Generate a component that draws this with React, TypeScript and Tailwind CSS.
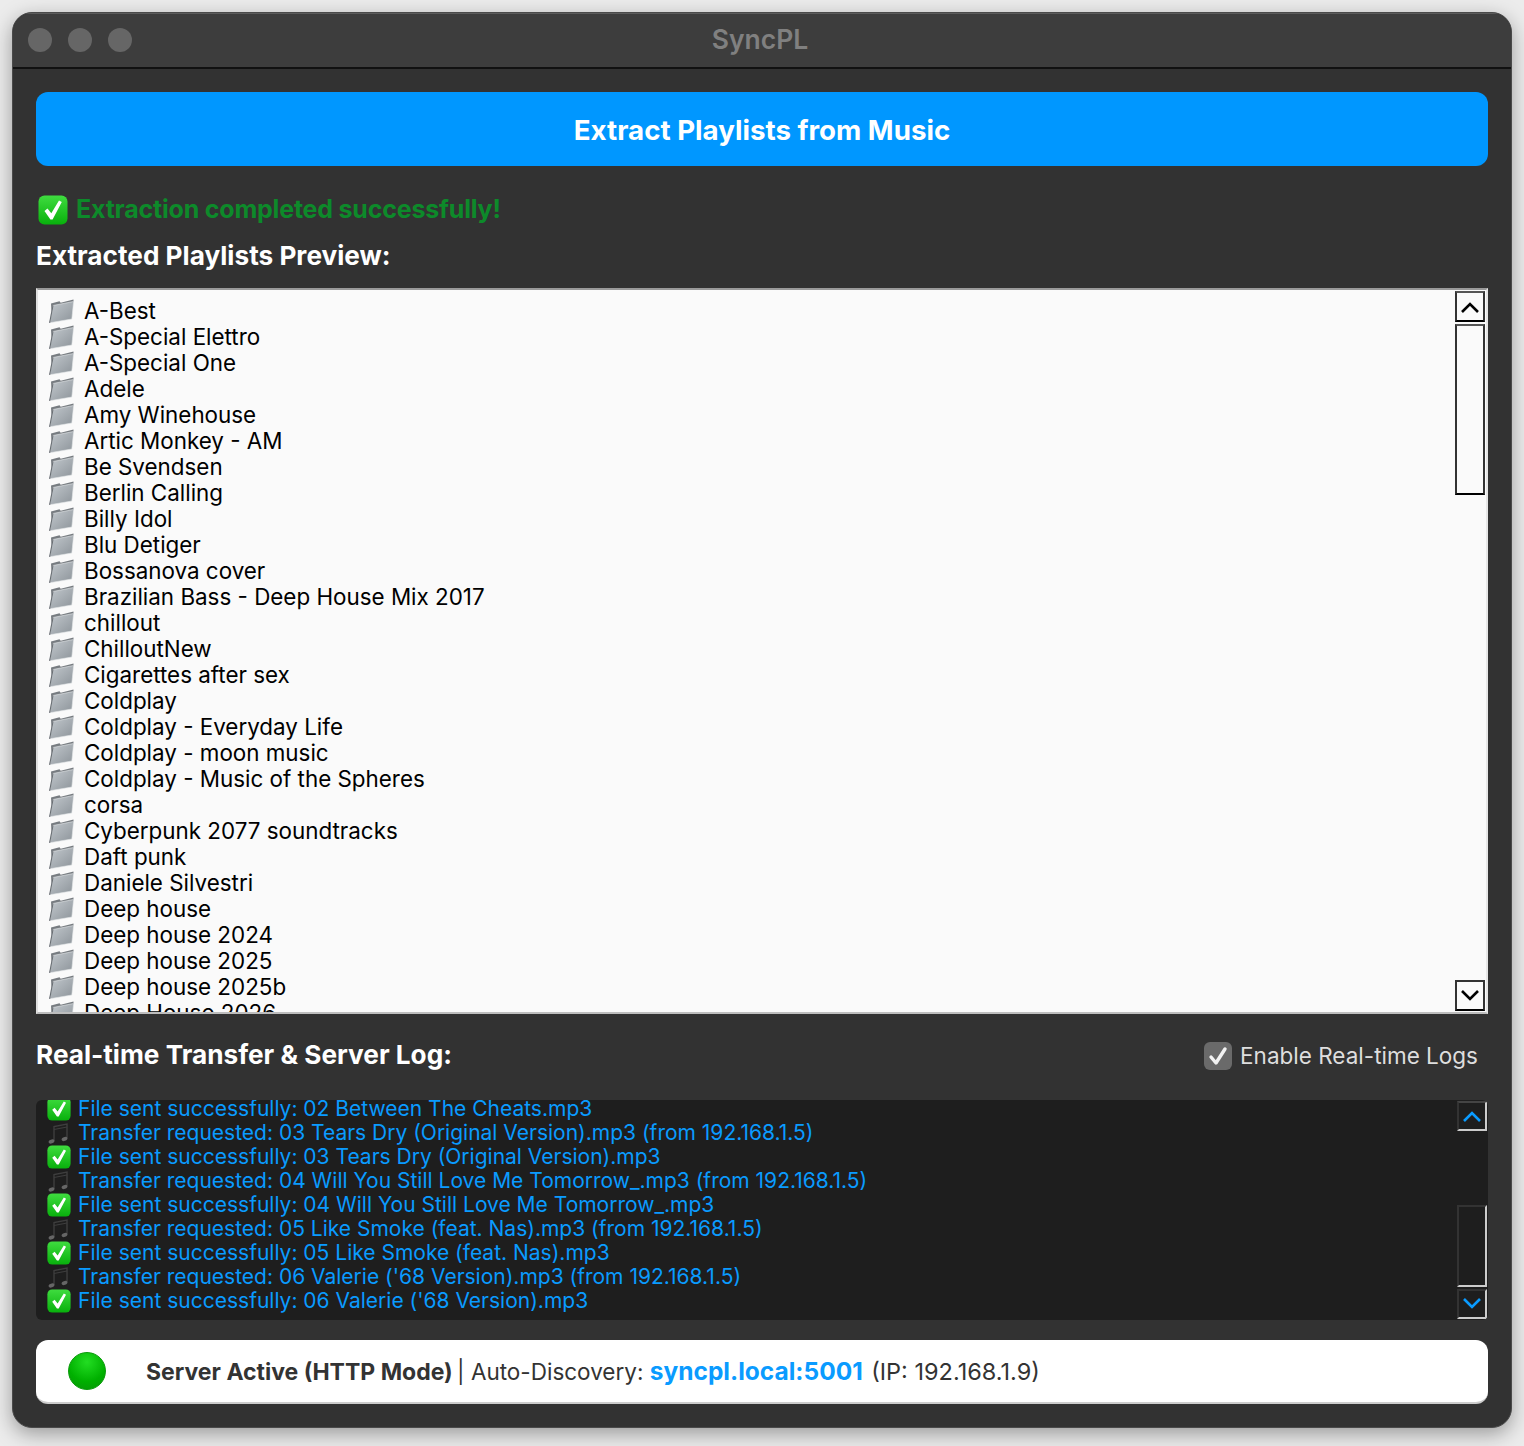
const playlists = [
  "A-Best",
  "A-Special Elettro",
  "A-Special One",
  "Adele",
  "Amy Winehouse",
  "Artic Monkey - AM",
  "Be Svendsen",
  "Berlin Calling",
  "Billy Idol",
  "Blu Detiger",
  "Bossanova cover",
  "Brazilian Bass - Deep House Mix 2017",
  "chillout",
  "ChilloutNew",
  "Cigarettes after sex",
  "Coldplay",
  "Coldplay - Everyday Life",
  "Coldplay - moon music",
  "Coldplay - Music of the Spheres",
  "corsa",
  "Cyberpunk 2077 soundtracks",
  "Daft punk",
  "Daniele Silvestri",
  "Deep house",
  "Deep house 2024",
  "Deep house 2025",
  "Deep house 2025b",
  "Deep House 2026",
];

const logs = [
  { ok: true, text: "File sent successfully: 02 Between The Cheats.mp3" },
  { ok: false, text: "Transfer requested: 03 Tears Dry (Original Version).mp3 (from 192.168.1.5)" },
  { ok: true, text: "File sent successfully: 03 Tears Dry (Original Version).mp3" },
  { ok: false, text: "Transfer requested: 04 Will You Still Love Me Tomorrow_.mp3 (from 192.168.1.5)" },
  { ok: true, text: "File sent successfully: 04 Will You Still Love Me Tomorrow_.mp3" },
  { ok: false, text: "Transfer requested: 05 Like Smoke (feat. Nas).mp3 (from 192.168.1.5)" },
  { ok: true, text: "File sent successfully: 05 Like Smoke (feat. Nas).mp3" },
  { ok: false, text: "Transfer requested: 06 Valerie ('68 Version).mp3 (from 192.168.1.5)" },
  { ok: true, text: "File sent successfully: 06 Valerie ('68 Version).mp3" },
];

const CheckEmoji = ({ className }: { className: string }) => (
  <svg viewBox="0 0 30 30" className={className}>
    <defs>
      <linearGradient id="checkGreen" x1="0" y1="0" x2="0" y2="1">
        <stop offset="0" stopColor="#3fdc3f" />
        <stop offset="1" stopColor="#08b00c" />
      </linearGradient>
    </defs>
    <rect x="0.5" y="0.5" width="29" height="29" rx="6" fill="url(#checkGreen)" />
    <path d="M6.5 16l3-2.6 3.8 4.8L21 5.5l2.8 1.6L14.6 24.5h-2.2z" fill="#fff" />
  </svg>
);

const FolderIcon = () => (
  <svg viewBox="0 0 26 24" className="h-6 w-[26px] shrink-0">
    <defs>
      <linearGradient id="folderFront" x1="0" y1="0" x2="1" y2="1">
        <stop offset="0" stopColor="#c3c9ce" />
        <stop offset="1" stopColor="#8c9399" />
      </linearGradient>
    </defs>
    <path d="M3 4.5l8.5-2.2 1.2 1.4L25.5 0.5V3L4 22z" fill="#777c81" />
    <path d="M5 6.5l20.6-4L23.8 20 1.6 23.8z" fill="url(#folderFront)" stroke="#e3e5e7" strokeWidth="0.6" />
    <path d="M5 6.5L1.6 23.8" stroke="#686d72" strokeWidth="1.1" />
  </svg>
);

const NoteIcon = () => (
  <svg viewBox="0 0 24 24" className="h-6 w-6 shrink-0" fill="none">
    <path d="M7 20V5.5L20 3v14.5" stroke="#3e3e3e" strokeWidth="1.4" />
    <path d="M7 8.5L20 6" stroke="#3e3e3e" strokeWidth="1.2" />
    <ellipse cx="4.5" cy="20.5" rx="3" ry="1.9" fill="#666" transform="rotate(-20 4.5 20.5)" />
    <ellipse cx="17.5" cy="18" rx="3" ry="1.9" fill="#666" transform="rotate(-20 17.5 18)" />
  </svg>
);

const Chevron = ({ up, color }: { up: boolean; color: string }) => (
  <svg viewBox="0 0 24 14" className="h-[14px] w-6" fill="none" stroke={color} strokeWidth="2.6">
    <path d={up ? "M4 12l8-8 8 8" : "M4 2l8 8 8-8"} />
  </svg>
);

export default function App() {
  return (
    <div className="h-[1446px] w-[1524px] bg-[#ececec] p-3 font-['Inter','Noto_Sans',sans-serif]">
      <div className="flex h-[1416px] w-[1500px] flex-col overflow-hidden rounded-[20px] border border-[#4a4a4a] bg-[#323232] shadow-[0_6px_20px_rgba(0,0,0,0.35)]">
        <div className="relative flex h-14 shrink-0 items-center gap-4 border-b-2 border-[#111] bg-[#3d3d3d] pl-[15px] shadow-[inset_0_1px_0_#5c5c5c]">
          <span className="h-6 w-6 rounded-full bg-[#666]" />
          <span className="h-6 w-6 rounded-full bg-[#666]" />
          <span className="h-6 w-6 rounded-full bg-[#666]" />
          <span className="absolute inset-x-0 pr-1 text-center text-[26.5px] font-semibold text-[#808080]">SyncPL</span>
        </div>

        <div className="flex flex-1 flex-col px-[23px] pt-[23px]">
          <button className="h-[74px] shrink-0 rounded-xl bg-[#0097ff] pt-1 text-[27.7px] font-bold text-white">
            Extract Playlists from Music
          </button>

          <div className="mt-[30px] flex h-7 items-center gap-2 pl-0.5 text-[25px] font-bold text-[#0d8a2a]">
            <CheckEmoji className="h-[30px] w-[30px] shrink-0" />
            <span className="tracking-[-0.2px]">Extraction completed successfully!</span>
          </div>

          <h2 className="mt-[18px] h-7 text-[26.2px] leading-7 font-bold text-white">Extracted Playlists Preview:</h2>

          <div className="mt-[18px] flex h-[726px] shrink-0 overflow-hidden border-2 border-t-[#9a9a9a] border-r-[#e6e6e6] border-b-[#bdbdbd] border-l-[#e0e0e0] bg-[#fafafa]">
            <div className="flex-1 overflow-hidden pt-2 pl-2.5">
              {playlists.map((name) => (
                <div key={name} className="flex h-[26px] items-center gap-[10px] text-[22.4px] text-black">
                  <FolderIcon />
                  <span>{name}</span>
                </div>
              ))}
            </div>
            <div className="flex w-[31px] shrink-0 flex-col pt-px">
              <div className="flex h-[31px] w-[30px] items-center justify-center border-2 border-t-[#555] border-r-[#333] border-b-black border-l-[#333] bg-[#fafafa]">
                <Chevron up color="#000" />
              </div>
              <div className="mt-0.5 h-[171px] w-[30px] border-2 border-t-[#555] border-r-[#333] border-b-black border-l-[#333]" />
              <div className="mt-auto mb-px flex h-[31px] w-[30px] items-center justify-center border-2 border-t-[#333] border-r-[#333] border-b-black border-l-[#333] bg-[#fafafa]">
                <Chevron up={false} color="#000" />
              </div>
            </div>
          </div>

          <div className="mt-7 flex h-7 items-center justify-between pr-2.5">
            <h2 className="mb-0.5 text-[26.2px] leading-7 font-bold text-white">Real-time Transfer &amp; Server Log:</h2>
            <label className="flex items-center gap-2 text-[22.5px] text-[#dedede]">
              <span className="flex h-7 w-7 items-center justify-center rounded-md bg-[#6a6a6a]">
                <svg viewBox="0 0 24 24" className="h-6 w-6" fill="none" stroke="#f2f2f2" strokeWidth="3.4" strokeLinecap="round" strokeLinejoin="round">
                  <path d="M5 13l5 6L19 5" />
                </svg>
              </span>
              Enable Real-time Logs
            </label>
          </div>

          <div className="mt-[30px] flex h-[220px] shrink-0 overflow-hidden rounded-md bg-[#1e1e1e]">
            <div className="flex-1 overflow-hidden pl-[11px]">
              <div className="-mt-[3px]">
                {logs.map((row) => (
                  <div key={row.text} className="flex h-6 items-center gap-[7px] text-[21px] text-[#0a9bff]">
                    {row.ok ? <CheckEmoji className="h-6 w-6 shrink-0" /> : <NoteIcon />}
                    <span>{row.text}</span>
                  </div>
                ))}
              </div>
            </div>
            <div className="flex w-[31px] shrink-0 flex-col pt-px">
              <div className="flex h-[30px] w-[30px] items-center justify-center border-2 border-t-[#444] border-r-[#ccc] border-b-[#ccc] border-l-[#333]">
                <Chevron up color="#0a9bff" />
              </div>
              <div className="mt-auto h-[82px] w-[30px] border-2 border-t-[#333] border-r-[#ccc] border-b-[#ccc] border-l-[#333]" />
              <div className="mt-0.5 mb-px flex h-[30px] w-[30px] items-center justify-center border-2 border-t-[#333] border-r-[#ccc] border-b-[#ccc] border-l-[#333]">
                <Chevron up={false} color="#0a9bff" />
              </div>
            </div>
          </div>

          <div className="mt-5 flex h-16 shrink-0 items-center rounded-xl border-b-2 border-[#ccc] bg-white pl-8 text-[22.5px] text-[#333]">
            <span className="h-[38px] w-[38px] shrink-0 rounded-full border border-[#0a9a0a] bg-[radial-gradient(circle_at_50%_25%,#22dd22,#00b000_60%,#089408)]" />
            <span className="ml-10">
              <b className="text-[23px] font-bold">Server Active (HTTP Mode)</b>{" "}
              <span className="-ml-0.5">| Auto-Discovery:</span>{" "}
              <b className="text-[24.5px] font-bold text-[#0a9bff]">syncpl.local:5001</b>{" "}
              <span className="ml-0.5 text-[23.5px]">(IP: 192.168.1.9)</span>
            </span>
          </div>
        </div>
      </div>
    </div>
  );
}
